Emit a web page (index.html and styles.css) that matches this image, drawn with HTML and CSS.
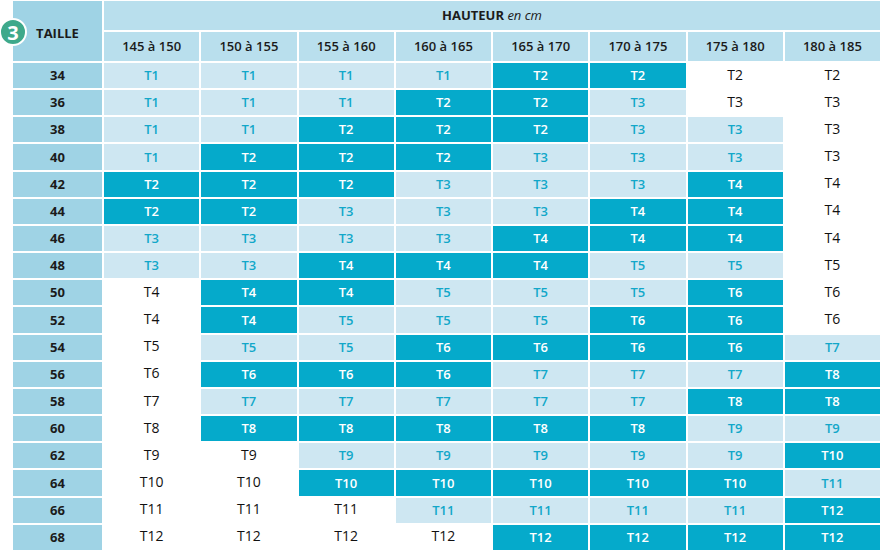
FILE: index.html
```html
<!DOCTYPE html>
<html lang="fr">
<head>
<meta charset="utf-8">
<title>Tailles</title>
<link rel="stylesheet" href="styles.css">
</head>
<body>
<div class="wrap">
  <span class="badge">3</span>
  <div class="grid">
    <div class="c t th">TAILLE</div>
    <div class="c h hh"><b>HAUTEUR</b>&nbsp;<i>en cm</i></div>
    <div class="c h">145 à 150</div><div class="c h">150 à 155</div><div class="c h">155 à 160</div><div class="c h">160 à 165</div><div class="c h">165 à 170</div><div class="c h">170 à 175</div><div class="c h">175 à 180</div><div class="c h">180 à 185</div>

    <div class="c t">34</div><div class="c l">T1</div><div class="c l">T1</div><div class="c l">T1</div><div class="c l">T1</div><div class="c d">T2</div><div class="c d">T2</div><div class="c w">T2</div><div class="c w">T2</div>
    <div class="c t">36</div><div class="c l">T1</div><div class="c l">T1</div><div class="c l">T1</div><div class="c d">T2</div><div class="c d">T2</div><div class="c l">T3</div><div class="c w">T3</div><div class="c w">T3</div>
    <div class="c t">38</div><div class="c l">T1</div><div class="c l">T1</div><div class="c d">T2</div><div class="c d">T2</div><div class="c d">T2</div><div class="c l">T3</div><div class="c l">T3</div><div class="c w">T3</div>
    <div class="c t">40</div><div class="c l">T1</div><div class="c d">T2</div><div class="c d">T2</div><div class="c d">T2</div><div class="c l">T3</div><div class="c l">T3</div><div class="c l">T3</div><div class="c w">T3</div>
    <div class="c t">42</div><div class="c d">T2</div><div class="c d">T2</div><div class="c d">T2</div><div class="c l">T3</div><div class="c l">T3</div><div class="c l">T3</div><div class="c d">T4</div><div class="c w">T4</div>
    <div class="c t">44</div><div class="c d">T2</div><div class="c d">T2</div><div class="c l">T3</div><div class="c l">T3</div><div class="c l">T3</div><div class="c d">T4</div><div class="c d">T4</div><div class="c w">T4</div>
    <div class="c t">46</div><div class="c l">T3</div><div class="c l">T3</div><div class="c l">T3</div><div class="c l">T3</div><div class="c d">T4</div><div class="c d">T4</div><div class="c d">T4</div><div class="c w">T4</div>
    <div class="c t">48</div><div class="c l">T3</div><div class="c l">T3</div><div class="c d">T4</div><div class="c d">T4</div><div class="c d">T4</div><div class="c l">T5</div><div class="c l">T5</div><div class="c w">T5</div>
    <div class="c t">50</div><div class="c w">T4</div><div class="c d">T4</div><div class="c d">T4</div><div class="c l">T5</div><div class="c l">T5</div><div class="c l">T5</div><div class="c d">T6</div><div class="c w">T6</div>
    <div class="c t">52</div><div class="c w">T4</div><div class="c d">T4</div><div class="c l">T5</div><div class="c l">T5</div><div class="c l">T5</div><div class="c d">T6</div><div class="c d">T6</div><div class="c w">T6</div>
    <div class="c t">54</div><div class="c w">T5</div><div class="c l">T5</div><div class="c l">T5</div><div class="c d">T6</div><div class="c d">T6</div><div class="c d">T6</div><div class="c d">T6</div><div class="c l">T7</div>
    <div class="c t">56</div><div class="c w">T6</div><div class="c d">T6</div><div class="c d">T6</div><div class="c d">T6</div><div class="c l">T7</div><div class="c l">T7</div><div class="c l">T7</div><div class="c d">T8</div>
    <div class="c t">58</div><div class="c w">T7</div><div class="c l">T7</div><div class="c l">T7</div><div class="c l">T7</div><div class="c l">T7</div><div class="c l">T7</div><div class="c d">T8</div><div class="c d">T8</div>
    <div class="c t">60</div><div class="c w">T8</div><div class="c d">T8</div><div class="c d">T8</div><div class="c d">T8</div><div class="c d">T8</div><div class="c d">T8</div><div class="c l">T9</div><div class="c l">T9</div>
    <div class="c t">62</div><div class="c w">T9</div><div class="c w">T9</div><div class="c l">T9</div><div class="c l">T9</div><div class="c l">T9</div><div class="c l">T9</div><div class="c l">T9</div><div class="c d">T10</div>
    <div class="c t">64</div><div class="c w">T10</div><div class="c w">T10</div><div class="c d">T10</div><div class="c d">T10</div><div class="c d">T10</div><div class="c d">T10</div><div class="c d">T10</div><div class="c l">T11</div>
    <div class="c t">66</div><div class="c w">T11</div><div class="c w">T11</div><div class="c w">T11</div><div class="c l">T11</div><div class="c l">T11</div><div class="c l">T11</div><div class="c l">T11</div><div class="c d">T12</div>
    <div class="c t">68</div><div class="c w">T12</div><div class="c w">T12</div><div class="c w">T12</div><div class="c w">T12</div><div class="c d">T12</div><div class="c d">T12</div><div class="c d">T12</div><div class="c d">T12</div>
  </div>
</div>
</body>
</html>
```
FILE: styles.css
```css
html, body {
  margin: 0;
  padding: 0;
  background: #ffffff;
}
body {
  font-family: "Open Sans", "Liberation Sans", sans-serif;
  width: 880px;
  height: 551px;
  overflow: hidden;
}
.wrap {
  position: relative;
  padding: 1px 0 0 13px;
}
.grid {
  display: grid;
  width: 867px;
  height: 549px;
  grid-template-columns: 89px repeat(8, 1fr);
  grid-template-rows: 29px 29px repeat(18, 1fr);
  gap: 2px;
}
.c {
  display: flex;
  align-items: center;
  justify-content: center;
  font-size: 13px;
  line-height: 1;
}
.t {
  background: #9fd3e5;
  color: #1b1b1b;
  font-weight: 700;
}
.th {
  grid-row: 1 / span 2;
  font-size: 13px;
  padding-top: 4px;
}
.h {
  background: #b9dfed;
  color: #1b1b1b;
  font-weight: 600;
}
.hh {
  grid-column: 2 / span 8;
}
.hh b { font-weight: 700; }
.hh i { font-weight: 400; font-style: italic; }
.l {
  background: #cee7f2;
  color: #12a7c9;
  font-weight: 600;
}
.d {
  background: #05aacb;
  color: #ffffff;
  font-weight: 600;
}
.w {
  background: #ffffff;
  color: #111111;
  font-weight: 400;
  font-size: 14px;
  padding-bottom: 2px;
}
.badge {
  position: absolute;
  left: -1px;
  top: 18px;
  width: 24px;
  height: 24px;
  border: 2px solid #ffffff;
  border-radius: 50%;
  background: #3ea98b;
  color: #ffffff;
  font-weight: 700;
  font-size: 20px;
  display: flex;
  align-items: center;
  justify-content: center;
  z-index: 2;
}
```
